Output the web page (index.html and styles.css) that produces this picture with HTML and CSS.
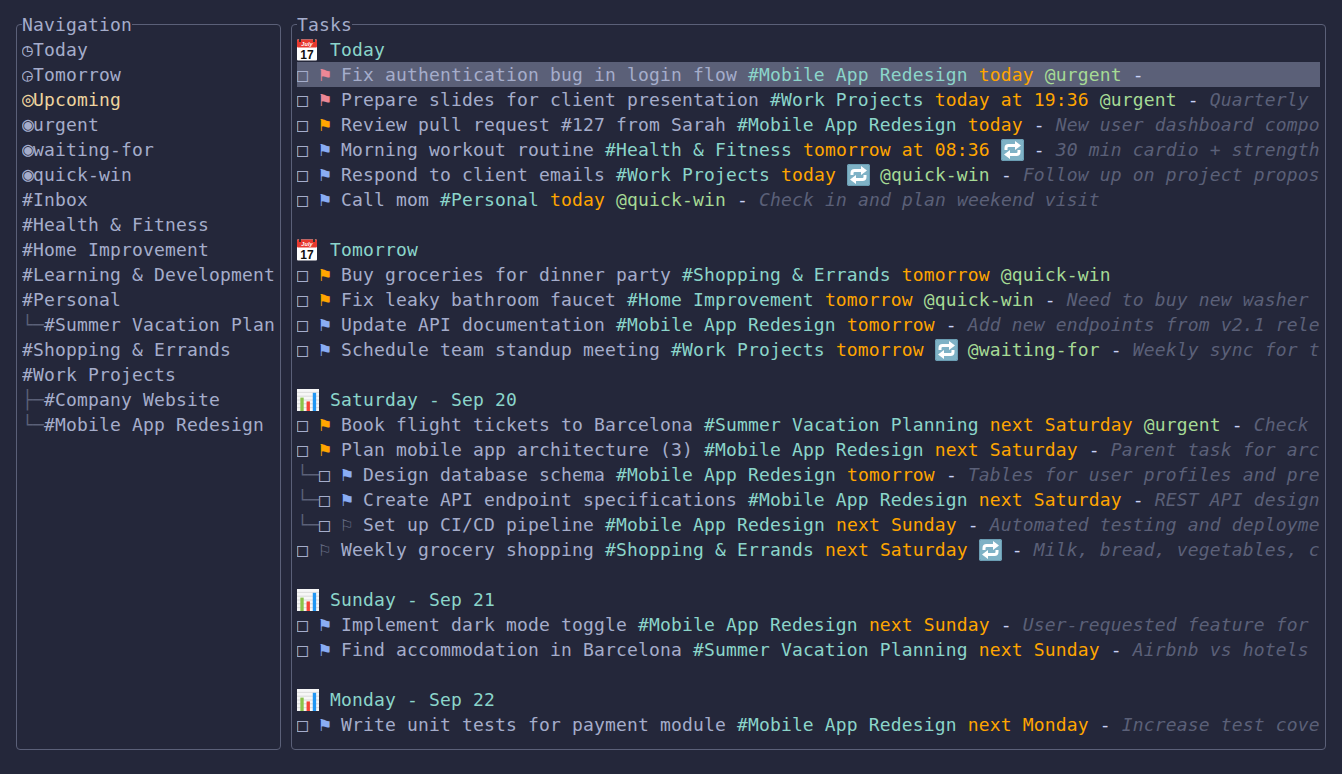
FILE: index.html
```html
<!DOCTYPE html>
<html>

<head>
  <meta charset="utf-8" />
  <title>Tasks</title>
  <link rel="stylesheet" href="styles.css">
</head>

<body>
  <svg class="defs" width="0" height="0">
    <symbol id="chart" viewBox="0 0 23 23" preserveAspectRatio="xMinYMid">
      <rect width="23" height="23" fill="#f7f7f7" />
      <path d="M0 3.500H23M0 7.500H23M0 11.500H23M0 15.500H23M0 19.500H23" stroke="#d8d8d8" />
      <rect x="3.500" y="9" width="3.500" height="14" fill="#8bc34a" />
      <rect x="10" y="13" width="3.500" height="10" fill="#f44336" />
      <rect x="16.500" y="4" width="3.500" height="19" fill="#2196f3" />
    </symbol>
    <symbol id="loop" viewBox="0 0 23 22" preserveAspectRatio="xMinYMid">
      <rect width="23" height="22" rx="2" fill="#7fb2c6" />
      <rect x=".5" y=".5" width="22" height="21" rx="2" fill="none" stroke="#6a9db3" />
      <path d="M5 11V9q0-2.500 2.500-2.500H15M18 11v2q0 2.500-2.500 2.500H8" fill="none" stroke="#fff" stroke-width="3" />
      <path d="M14 2l6 4.500-6 4.500zM9 11l-6 4.500 6 4.500z" fill="#fff" />
    </symbol>
  </svg>

  <fieldset class="panel nav">
    <legend>Navigation</legend>
    <div class="row"><span class="c">◷</span>Today</div>
    <div class="row"><span class="c">◶</span>Tomorrow</div>
    <div class="row active"><span class="c big">◎</span>Upcoming</div>
    <div class="row"><span class="c big">◉</span>urgent</div>
    <div class="row"><span class="c big">◉</span>waiting-for</div>
    <div class="row"><span class="c big">◉</span>quick-win</div>
    <div class="row">#Inbox</div>
    <div class="row">#Health &amp; Fitness</div>
    <div class="row">#Home Improvement</div>
    <div class="row">#Learning &amp; Development</div>
    <div class="row">#Personal</div>
    <div class="row"><span class="tree">└─</span>#Summer Vacation Plan</div>
    <div class="row">#Shopping &amp; Errands</div>
    <div class="row">#Work Projects</div>
    <div class="row"><span class="tree">├─</span>#Company Website</div>
    <div class="row"><span class="tree">└─</span>#Mobile App Redesign</div>
  </fieldset>

  <fieldset class="panel tasks">
    <legend>Tasks</legend>

    <div class="row head"><svg class="emoji" viewBox="0 0 23 22" preserveAspectRatio="xMinYMid"><rect width="20" height="21" y=".5" rx="1" fill="#fff" /><rect width="20" height="8" y=".5" rx="1" fill="#e8392f" /><rect x="2" width="2" height="3" fill="#333" /><rect x="16" width="2" height="3" fill="#333" /><text x="10" y="6.800" font-size="5.500" font-weight="bold" font-style="italic" fill="#fff" text-anchor="middle" font-family="Liberation Sans">July</text><text x="10" y="20" font-size="12" font-weight="bold" fill="#111" text-anchor="middle" font-family="Liberation Sans">17</text></svg> Today</div>
    <div class="row sel"><span class="c box">□</span> <span class="c flag f-red">⚑</span> Fix authentication bug in login flow <span class="p">#Mobile App Redesign</span> <span class="d">today</span> <span class="l">@urgent</span> <span class="m">-</span></div>
    <div class="row"><span class="c box">□</span> <span class="c flag f-red">⚑</span> Prepare slides for client presentation <span class="p">#Work Projects</span> <span class="d">today at 19:36</span> <span class="l">@urgent</span> <span class="m">-</span> <span class="n">Quarterly</span></div>
    <div class="row"><span class="c box">□</span> <span class="c flag f-org">⚑</span> Review pull request #127 from Sarah <span class="p">#Mobile App Redesign</span> <span class="d">today</span> <span class="m">-</span> <span class="n">New user dashboard compo</span></div>
    <div class="row"><span class="c box">□</span> <span class="c flag f-blu">⚑</span> Morning workout routine <span class="p">#Health &amp; Fitness</span> <span class="d">tomorrow at 08:36</span> <svg class="emoji"><use href="#loop" /></svg> <span class="m">-</span> <span class="n">30 min cardio + strength</span></div>
    <div class="row"><span class="c box">□</span> <span class="c flag f-blu">⚑</span> Respond to client emails <span class="p">#Work Projects</span> <span class="d">today</span> <svg class="emoji"><use href="#loop" /></svg> <span class="l">@quick-win</span> <span class="m">-</span> <span class="n">Follow up on project propos</span></div>
    <div class="row"><span class="c box">□</span> <span class="c flag f-blu">⚑</span> Call mom <span class="p">#Personal</span> <span class="d">today</span> <span class="l">@quick-win</span> <span class="m">-</span> <span class="n">Check in and plan weekend visit</span></div>
    <div class="row"></div>

    <div class="row head"><svg class="emoji" viewBox="0 0 23 22" preserveAspectRatio="xMinYMid"><rect width="20" height="21" y=".5" rx="1" fill="#fff" /><rect width="20" height="8" y=".5" rx="1" fill="#e8392f" /><rect x="2" width="2" height="3" fill="#333" /><rect x="16" width="2" height="3" fill="#333" /><text x="10" y="6.800" font-size="5.500" font-weight="bold" font-style="italic" fill="#fff" text-anchor="middle" font-family="Liberation Sans">July</text><text x="10" y="20" font-size="12" font-weight="bold" fill="#111" text-anchor="middle" font-family="Liberation Sans">17</text></svg> Tomorrow</div>
    <div class="row"><span class="c box">□</span> <span class="c flag f-org">⚑</span> Buy groceries for dinner party <span class="p">#Shopping &amp; Errands</span> <span class="d">tomorrow</span> <span class="l">@quick-win</span></div>
    <div class="row"><span class="c box">□</span> <span class="c flag f-org">⚑</span> Fix leaky bathroom faucet <span class="p">#Home Improvement</span> <span class="d">tomorrow</span> <span class="l">@quick-win</span> <span class="m">-</span> <span class="n">Need to buy new washer</span></div>
    <div class="row"><span class="c box">□</span> <span class="c flag f-blu">⚑</span> Update API documentation <span class="p">#Mobile App Redesign</span> <span class="d">tomorrow</span> <span class="m">-</span> <span class="n">Add new endpoints from v2.1 rele</span></div>
    <div class="row"><span class="c box">□</span> <span class="c flag f-blu">⚑</span> Schedule team standup meeting <span class="p">#Work Projects</span> <span class="d">tomorrow</span> <svg class="emoji"><use href="#loop" /></svg> <span class="l">@waiting-for</span> <span class="m">-</span> <span class="n">Weekly sync for t</span></div>
    <div class="row"></div>

    <div class="row head"><svg class="emoji"><use href="#chart" /></svg> Saturday - Sep 20</div>
    <div class="row"><span class="c box">□</span> <span class="c flag f-org">⚑</span> Book flight tickets to Barcelona <span class="p">#Summer Vacation Planning</span> <span class="d">next Saturday</span> <span class="l">@urgent</span> <span class="m">-</span> <span class="n">Check</span></div>
    <div class="row"><span class="c box">□</span> <span class="c flag f-org">⚑</span> Plan mobile app architecture (3) <span class="p">#Mobile App Redesign</span> <span class="d">next Saturday</span> <span class="m">-</span> <span class="n">Parent task for arc</span></div>
    <div class="row"><span class="tree">└─</span><span class="c box">□</span> <span class="c flag f-blu">⚑</span> Design database schema <span class="p">#Mobile App Redesign</span> <span class="d">tomorrow</span> <span class="m">-</span> <span class="n">Tables for user profiles and pre</span></div>
    <div class="row"><span class="tree">└─</span><span class="c box">□</span> <span class="c flag f-blu">⚑</span> Create API endpoint specifications <span class="p">#Mobile App Redesign</span> <span class="d">next Saturday</span> <span class="m">-</span> <span class="n">REST API design</span></div>
    <div class="row"><span class="tree">└─</span><span class="c box">□</span> <span class="c flag f-non">⚐</span> Set up CI/CD pipeline <span class="p">#Mobile App Redesign</span> <span class="d">next Sunday</span> <span class="m">-</span> <span class="n">Automated testing and deployme</span></div>
    <div class="row"><span class="c box">□</span> <span class="c flag f-non">⚐</span> Weekly grocery shopping <span class="p">#Shopping &amp; Errands</span> <span class="d">next Saturday</span> <svg class="emoji"><use href="#loop" /></svg> <span class="m">-</span> <span class="n">Milk, bread, vegetables, c</span></div>
    <div class="row"></div>

    <div class="row head"><svg class="emoji"><use href="#chart" /></svg> Sunday - Sep 21</div>
    <div class="row"><span class="c box">□</span> <span class="c flag f-blu">⚑</span> Implement dark mode toggle <span class="p">#Mobile App Redesign</span> <span class="d">next Sunday</span> <span class="m">-</span> <span class="n">User-requested feature for</span></div>
    <div class="row"><span class="c box">□</span> <span class="c flag f-blu">⚑</span> Find accommodation in Barcelona <span class="p">#Summer Vacation Planning</span> <span class="d">next Sunday</span> <span class="m">-</span> <span class="n">Airbnb vs hotels</span></div>
    <div class="row"></div>

    <div class="row head"><svg class="emoji"><use href="#chart" /></svg> Monday - Sep 22</div>
    <div class="row"><span class="c box">□</span> <span class="c flag f-blu">⚑</span> Write unit tests for payment module <span class="p">#Mobile App Redesign</span> <span class="d">next Monday</span> <span class="m">-</span> <span class="n">Increase test cove</span></div>
  </fieldset>
</body>

</html>
```

FILE: styles.css
```css
* { box-sizing: border-box; }
html, body { height: 100%; }
body {
  display: flex;
  gap: 10px;
  margin: 0;
  padding: 12px 16px 24px;
  overflow: hidden;
  background: #24273a;
  color: #a5adcb;
  font-family: "DejaVu Sans Mono", "Liberation Mono", monospace;
  font-size: 18px;
  letter-spacing: 0.16px;
  line-height: 25px;
}
.defs { position: absolute; }
.panel {
  min-width: 0;
  margin: 0;
  padding: 0 5px;
  border: 1px solid #5b6078;
  border-radius: 4px;
}
.panel legend { padding: 0; }
.nav { flex: 0 0 265px; }
.tasks { flex: 1; }
.row {
  height: 25px;
  white-space: pre;
  overflow: hidden;
}
.active { color: #eed49f; }
.sel { background: #5b6078; }
.head { color: #8bd5ca; }
.c {
  display: inline-block;
  width: 11px;
  line-height: 0;
  text-align: left;
  letter-spacing: 0;
}
.big { font-size: 20px; }
.box { font-weight: bold; color: #a5adcb; }
.flag { font-size: 19px; }
.tree { color: #5b6078; }
.emoji {
  display: inline-block;
  width: 23px;
  height: 22px;
  margin-right: -1px;
  vertical-align: -5px;
}
.p { color: #8bd5ca; }
.d { color: #ffa500; }
.l { color: #a6da95; }
.m { color: #cad3f5; }
.n { color: #5b6078; font-style: italic; }
.f-red { color: #ed8796; }
.f-org { color: #ffa500; }
.f-blu { color: #8aadf4; }
.f-non { color: #6e738d; }
```
